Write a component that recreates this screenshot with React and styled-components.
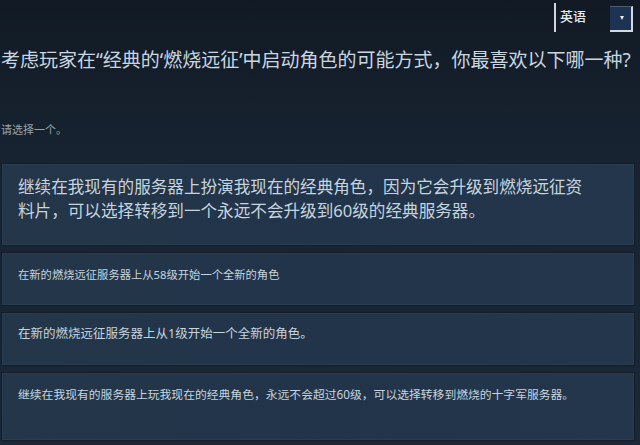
import styled, { createGlobalStyle } from "styled-components";

const GlobalStyle = createGlobalStyle`
  html, body {
    margin: 0;
    padding: 0;
    background: #151f2b;
  }
  * {
    box-sizing: border-box;
  }
`;

const Page = styled.div`
  width: 640px;
  height: 445px;
  overflow: hidden;
  background: linear-gradient(180deg, #111a24 0%, #172331 35%, #1a2837 100%);
  font-family: "Noto Sans", "Noto Sans CJK SC", sans-serif;
  color: #c6d4df;
`;

const Header = styled.div`
  height: 34px;
  display: flex;
  justify-content: flex-end;
  align-items: flex-start;
  padding: 3px 7px 0 0;
`;

const LangSelect = styled.div`
  display: flex;
  align-items: flex-start;
  height: 29px;
  width: 79px;
  border-left: 2px solid #cfd6dd;
  padding-left: 4px;
`;

const LangLabel = styled.span`
  font-size: 13px;
  line-height: 26px;
  font-weight: 500;
  color: #e6eaee;
  flex: 1;
`;

const DropButton = styled.div`
  margin-top: 3px;
  width: 23px;
  height: 26px;
  background: #1d3354;
  border-top: 1px solid #4d5c6c;
  border-right: 2px solid #d3d9df;
  border-bottom: 2px solid #d3d9df;
  display: flex;
  align-items: center;
  justify-content: center;

  &::after {
    content: "";
    display: block;
    margin-left: 3px;
    margin-top: -2px;
    border-left: 2.5px solid transparent;
    border-right: 2.5px solid transparent;
    border-top: 4px solid #e8ecf0;
  }
`;

const Title = styled.h1`
  margin: 14px 0 0;
  padding-left: 1px;
  font-size: 19px;
  line-height: 24px;
  font-weight: 400;
  white-space: nowrap;
  color: #c9d6e0;
`;

const Hint = styled.p`
  margin: 50px 0 0;
  padding-left: 1px;
  font-size: 11px;
  line-height: 16px;
  color: #9aa4ad;
`;

const OptionList = styled.div`
  margin-top: 26px;
  padding: 0 6px 0 2px;
  display: flex;
  flex-direction: column;
  gap: 8px;
`;

const Option = styled.div`
  height: ${(p) => p.$h}px;
  padding: ${(p) => p.$top}px 40px 0 15px;
  background: linear-gradient(90deg, #243649 0%, #22344a 50%, #24364b 100%);
  border: 1px solid #2a3c50;
  box-shadow: 0 0 0 1px #141d28;
  font-size: ${(p) => p.$size}px;
  line-height: ${(p) => p.$lh}px;
  color: #c6d4df;
`;

const options = [
  {
    text: "继续在我现有的服务器上扮演我现在的经典角色，因为它会升级到燃烧远征资料片，可以选择转移到一个永远不会升级到60级的经典服务器。",
    h: 81,
    top: 10,
    size: 16.6,
    lh: 24,
  },
  {
    text: "在新的燃烧远征服务器上从58级开始一个全新的角色",
    h: 52,
    top: 13,
    size: 11.3,
    lh: 16,
  },
  {
    text: "在新的燃烧远征服务器上从1级开始一个全新的角色。",
    h: 52,
    top: 12,
    size: 12.5,
    lh: 16,
  },
  {
    text: "继续在我现有的服务器上玩我现在的经典角色，永远不会超过60级，可以选择转移到燃烧的十字军服务器。",
    h: 67,
    top: 12,
    size: 11.8,
    lh: 16,
  },
];

export default function App() {
  return (
    <Page>
      <GlobalStyle />
      <Header>
        <LangSelect>
          <LangLabel>英语</LangLabel>
          <DropButton />
        </LangSelect>
      </Header>
      <Title>考虑玩家在“经典的‘燃烧远征’中启动角色的可能方式，你最喜欢以下哪一种?</Title>
      <Hint>请选择一个。</Hint>
      <OptionList>
        {options.map((o, i) => (
          <Option key={i} $h={o.h} $top={o.top} $size={o.size} $lh={o.lh}>
            {o.text}
          </Option>
        ))}
      </OptionList>
    </Page>
  );
}
